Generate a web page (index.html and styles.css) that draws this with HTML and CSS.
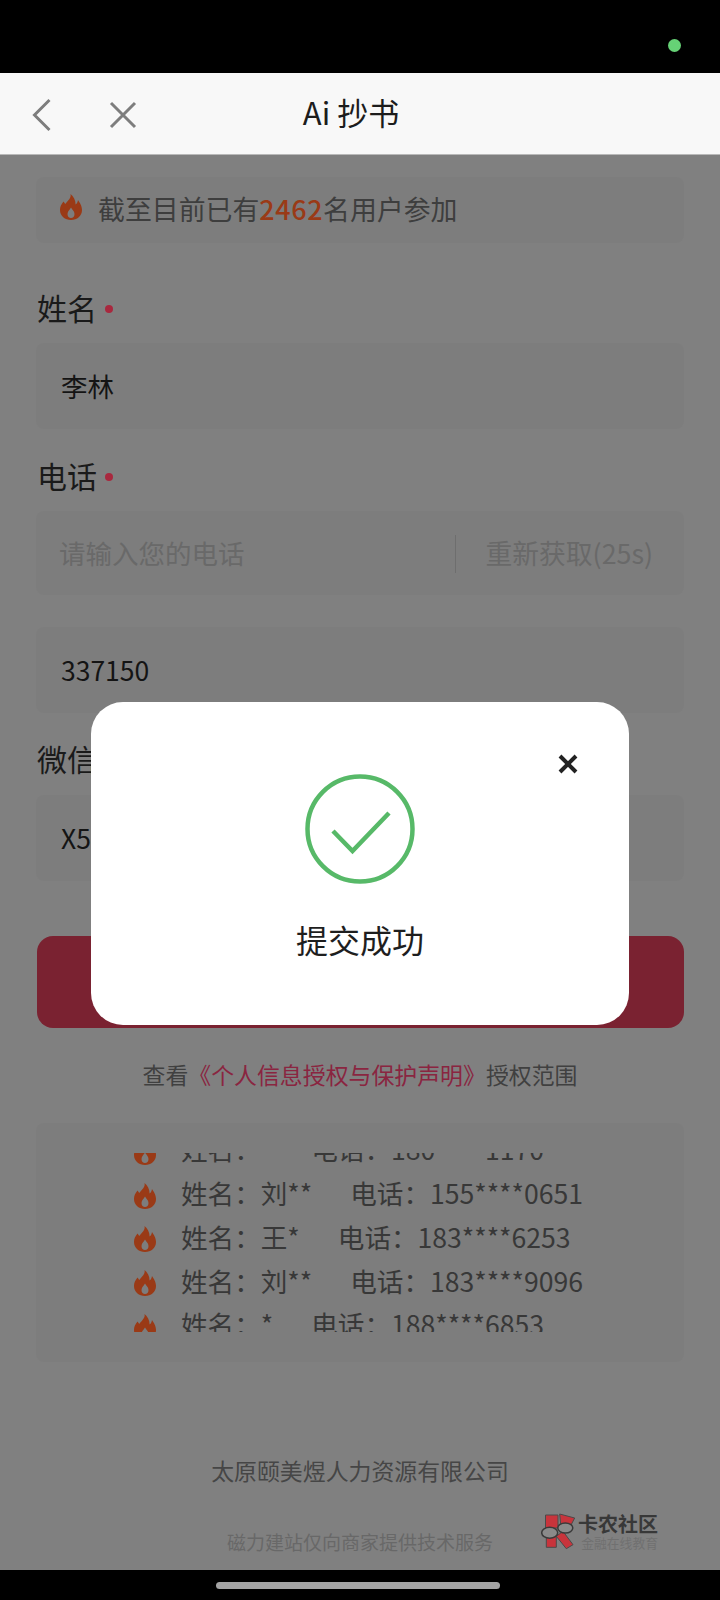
FILE: index.html
```html
<!DOCTYPE html>
<html lang="zh-CN">
<head>
<meta charset="utf-8">
<title>Ai 抄书</title>
<link rel="stylesheet" href="styles.css">
</head>
<body>
<svg class="defs" width="0" height="0" aria-hidden="true">
  <symbol id="flame" viewBox="0 0 22 26">
    <path fill-rule="evenodd" d="M10.5 0C11.5 4 8 6.5 5.2 10C4.7 9 4.2 8.2 3.5 7.5C1 10.5 0 13 0 16C0 22 5 26 11 26C17 26 22 22 22 16C22 11.5 19.5 8.5 18 6C17.6 8 17 9.5 15.6 10.5C15.6 6 13.5 2.5 10.5 0ZM11 13.5C12 15.5 14.5 17 14.5 20C14.5 22.4 13 24 11 24C9 24 7.5 22.4 7.5 20C7.5 17 10 15.5 11 13.5Z"/>
  </symbol>
</svg>
<div class="app">
  <div class="status"><span class="status-dot"></span></div>
  <header class="nav">
    <div class="nav-icons">
      <svg class="nav-back" width="20" height="34" viewBox="0 0 20 34"><path d="M17.5 2L2.5 17L17.5 32"/></svg>
      <svg class="nav-close" width="28" height="28" viewBox="0 0 28 28"><path d="M2 2L26 26M26 2L2 26"/></svg>
    </div>
    <h1 class="nav-title">Ai<span class="nav-title-cn">抄书</span></h1>
  </header>
  <main class="main">
    <div class="banner">
      <svg class="flame flame-banner"><use href="#flame"/></svg>
      <span>截至目前已有<b class="count">2462</b>名用户参加</span>
    </div>
    <div class="label label-name">姓名<i class="req"></i></div>
    <div class="field field-name">李林</div>
    <div class="label label-phone">电话<i class="req"></i></div>
    <div class="field field-phone">
      <span class="placeholder">请输入您的电话</span>
      <span class="code">重新获取(25s)</span>
    </div>
    <div class="field field-sms">337150</div>
    <div class="label label-wx">微信</div>
    <div class="field field-wx">X5</div>
    <div class="submit"></div>
    <p class="notice">查看<a class="notice-link">《个人信息授权与保护声明》</a>授权范围</p>
    <section class="list-card">
      <div class="list-clip">
        <div class="list">
          <div class="row"><svg class="flame flame-row"><use href="#flame"/></svg><span class="r-name">姓名：*</span><span class="r-phone">电话：180****1170</span></div>
          <div class="row"><svg class="flame flame-row"><use href="#flame"/></svg><span class="r-name">姓名：刘**</span><span class="r-phone">电话：155****0651</span></div>
          <div class="row"><svg class="flame flame-row"><use href="#flame"/></svg><span class="r-name">姓名：王*</span><span class="r-phone">电话：183****6253</span></div>
          <div class="row"><svg class="flame flame-row"><use href="#flame"/></svg><span class="r-name">姓名：刘**</span><span class="r-phone">电话：183****9096</span></div>
          <div class="row"><svg class="flame flame-row"><use href="#flame"/></svg><span class="r-name">姓名：*</span><span class="r-phone">电话：188****6853</span></div>
        </div>
      </div>
    </section>
    <p class="company">太原颐美煜人力资源有限公司</p>
    <p class="tech">磁力建站仅向商家提供技术服务</p>
  </main>
  <div class="gesture"><span class="gesture-bar"></span></div>

  <div class="modal">
    <svg class="modal-close" width="20" height="20" viewBox="0 0 20 20"><path d="M2 2L18 18M18 2L2 18"/></svg>
    <svg class="modal-check" width="110" height="110" viewBox="0 0 110 110">
      <circle cx="55" cy="55" r="52.5"/>
      <path d="M28 57L47.5 77L84 39"/>
    </svg>
    <div class="modal-text">提交成功</div>
  </div>

  <div class="watermark">
    <svg class="wm-mark" width="34" height="38" viewBox="0 0 34 38">
      <path class="wm-red" d="M4.5 2H17V15H4.5Z"/>
      <path class="wm-red" d="M18.7 1L33.7 5L30 12L20 15Z"/>
      <path class="wm-red" d="M5.3 23H15.3V34.3H5.3Z"/>
      <path class="wm-red" d="M15.3 23.3L22 18.3L32 31.7L25.3 35.7Z"/>
      <ellipse class="wm-lens" cx="8.7" cy="19.7" rx="8" ry="5.5"/>
      <ellipse class="wm-lens" cx="24.3" cy="15" rx="7.5" ry="5"/>
    </svg>
    <div class="wm-text">
      <div class="wm-title">卡农社区</div>
      <div class="wm-sub">金融在线教育</div>
    </div>
  </div>
</div>
</body>
</html>
```
FILE: styles.css
```css
* { box-sizing: border-box; }
html, body { margin: 0; padding: 0; }
body {
  width: 720px;
  height: 1600px;
  overflow: hidden;
  font-family: "Noto Sans CJK SC", "Noto Sans", sans-serif;
  background: #000;
}
.defs { position: absolute; }
.app { position: relative; width: 720px; height: 1600px; display: flex; flex-direction: column; }

.status { height: 73px; background: #000; display: flex; justify-content: flex-end; padding: 39px 39px 0 0; flex: none; }
.status-dot { width: 13px; height: 13px; border-radius: 50%; background: #66d276; }

.nav { position: relative; height: 82px; flex: none; background: #f8f8f8; border-bottom: 1px solid #b9b9b9; display: flex; align-items: center; justify-content: center; }
.nav-icons { position: absolute; left: 32px; top: 25px; display: flex; align-items: center; gap: 57px; }
.nav-back path, .nav-close path { fill: none; stroke: #7d7d7d; stroke-width: 3; }
.nav-title { margin: 0 18px 4px 0; font-size: 31px; font-weight: 400; color: #1c1c1c; line-height: 44px; }
.nav-title-cn { margin-left: 7px; }

.main { height: 1415px; flex: none; background: #808080; padding: 22px 36px 0; overflow: hidden; }

.banner { height: 66px; background: #7d7d7d; border-radius: 8px; display: flex; align-items: center; padding: 0 0 4px 24px; gap: 16px; font-size: 26.9px; color: #3e3e3e; }
.count { font-weight: 500; color: #9a3a16; letter-spacing: 0.6px; }
.flame { fill: #9a3a16; flex: none; }
.flame-banner { width: 22px; height: 26px; margin-top: -2px; }

.label { height: 40px; line-height: 38px; padding: 0 0 4px 1px; font-size: 30px; color: #1a1a1a; display: flex; align-items: center; }
.label-name { margin-top: 46px; }
.label-phone { margin-top: 28px; }
.label-wx { margin-top: 27px; }
.req { width: 8px; height: 8px; border-radius: 50%; background: #a8283e; margin: 4px 0 0 8px; }

.field { background: #7d7d7d; border-radius: 8px; height: 86px; display: flex; align-items: center; padding: 0 25px 2px; font-size: 26.5px; color: #141414; }
.field-name { margin-top: 14px; }
.field-phone { margin-top: 14px; height: 84px; padding-left: 23px; justify-content: space-between; padding-right: 31px; }
.field-sms { margin-top: 32px; }
.field-wx { margin-top: 15px; }
.placeholder { color: #696969; }
.code { color: #696969; border-left: 1px solid #6e6e6e; height: 38px; line-height: 36px; padding-left: 29px; font-size: 26.8px; margin-top: 3px; }

.submit { margin-top: 55px; height: 92px; margin-left: 1px; border-radius: 16px; background: #7a2231; }

.notice { margin: 31px 0 0; height: 30px; line-height: 30px; text-align: center; font-size: 22.9px; color: #404040; }
.notice-link { color: #8a2540; }

.list-card { margin-top: 34px; height: 239px; background: #7d7d7d; border-radius: 8px; padding-top: 30px; }
.list-clip { height: 179px; overflow: hidden; }
.list { margin-top: -26px; padding-left: 98px; }
.row { height: 43.75px; display: flex; align-items: center; font-size: 26.6px; color: #383838; white-space: nowrap; }
.flame-row { width: 22px; height: 26px; margin-right: 25px; margin-top: 6px; }
.r-phone { margin-left: 38px; }

.company { margin: 93px 0 0; height: 30px; line-height: 30px; text-align: center; font-size: 22.9px; color: #464646; }
.tech { margin: 42px 0 0; height: 30px; line-height: 30px; text-align: center; font-size: 19px; color: #686868; }

.gesture { height: 30px; flex: none; background: #000; padding: 12px 0 0 216px; }
.gesture-bar { display: block; width: 284px; height: 7px; border-radius: 4px; background: #a3a3a3; }

.modal { position: absolute; left: 91px; top: 702px; width: 538px; height: 323px; background: #fff; border-radius: 32px; display: flex; flex-direction: column; align-items: center; padding-top: 72px; }
.modal-close { position: absolute; right: 51px; top: 52px; }
.modal-close path { fill: none; stroke: #222; stroke-width: 4; }
.modal-check circle { fill: none; stroke: #57b968; stroke-width: 4.5; }
.modal-check path { fill: none; stroke: #57b968; stroke-width: 4.5; }
.modal-text { margin-top: 33px; font-size: 32px; line-height: 44px; color: #1e1e1e; }

.watermark { position: absolute; left: 541px; top: 1513px; display: flex; gap: 3px; }
.wm-red { fill: #c8343c; stroke: #4a4a4a; stroke-width: 1; }
.wm-lens { fill: #8a8a8a; stroke: #3a3a3a; stroke-width: 1.5; }
.wm-text { display: flex; flex-direction: column; align-items: flex-end; }
.wm-title { font-size: 20px; line-height: 22px; font-weight: 700; color: #383838; }
.wm-sub { font-size: 12.8px; line-height: 14px; margin-top: 1px; color: #707070; }
```
